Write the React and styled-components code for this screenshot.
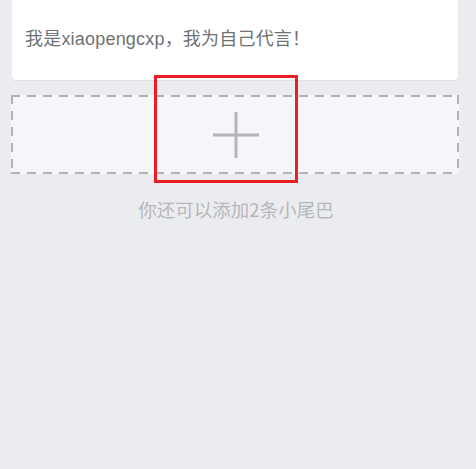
import React from "react";
import styled, { createGlobalStyle } from "styled-components";

const GlobalStyle = createGlobalStyle`
  html, body {
    margin: 0;
    padding: 0;
    background: #ebecf0;
  }
  body {
    font-family: "Noto Sans CJK SC", "Liberation Sans", sans-serif;
  }
`;

const Page = styled.div`
  width: 476px;
  height: 469px;
  box-sizing: border-box;
  padding: 0 17px 0 11px;
  display: flex;
  flex-direction: column;
  align-items: stretch;
  position: relative;
  overflow: hidden;
`;

const Card = styled.div`
  margin: 0 1px;
  background: #ffffff;
  border-radius: 0 0 4px 4px;
  box-shadow: 0 1px 1px rgba(0, 0, 0, 0.06);
  padding: 27px 13px 29px;
`;

const Signature = styled.p`
  margin: 0;
  font-size: 18px;
  line-height: 24px;
  letter-spacing: 0.2px;
  color: #707174;
  font-family: "Liberation Sans", "Noto Sans CJK SC", sans-serif;
`;

const dash = "#b2b3b6";

const AddBox = styled.div`
  margin-top: 15px;
  height: 79px;
  background-color: #f5f6fa;
  background-image:
    repeating-linear-gradient(90deg, ${dash} 0 9px, transparent 9px 16px),
    repeating-linear-gradient(90deg, ${dash} 0 9px, transparent 9px 16px),
    repeating-linear-gradient(180deg, ${dash} 0 9px, transparent 9px 16px),
    repeating-linear-gradient(180deg, ${dash} 0 9px, transparent 9px 16px);
  background-size: 100% 2px, 100% 2px, 2px 100%, 2px 100%;
  background-position: 0 0, 0 100%, 0 0, 100% 0;
  background-repeat: no-repeat;
  display: flex;
  align-items: center;
  justify-content: center;
`;

const PlusIcon = styled.svg`
  width: 46px;
  height: 46px;
  display: block;
  margin-left: 1px;
`;

const Hint = styled.p`
  margin: 23px 0 0;
  text-align: center;
  font-size: 18.5px;
  line-height: 24px;
  color: #b6b7bb;
  padding-left: 2px;
`;

const Highlight = styled.div`
  position: absolute;
  left: 154px;
  top: 75px;
  width: 138px;
  height: 102px;
  border: 3px solid #ee1c25;
  pointer-events: none;
`;

export default function App() {
  return (
    <>
      <GlobalStyle />
      <Page>
        <Card>
          <Signature>我是xiaopengcxp，我为自己代言！</Signature>
        </Card>
        <AddBox>
          <PlusIcon viewBox="0 0 46 46">
            <path
              d="M23 0 V46 M0 23 H46"
              stroke="#b4b5b9"
              strokeWidth="3"
              fill="none"
            />
          </PlusIcon>
        </AddBox>
        <Hint>你还可以添加2条小尾巴</Hint>
        <Highlight />
      </Page>
    </>
  );
}
